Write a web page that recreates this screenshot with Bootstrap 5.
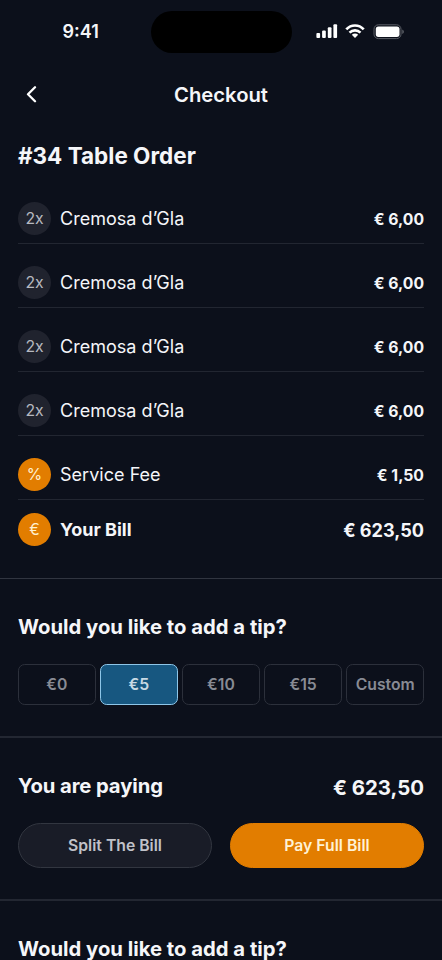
<!DOCTYPE html>
<html lang="en">
<head>
<meta charset="utf-8">
<meta name="viewport" content="width=device-width, initial-scale=1">
<title>Checkout</title>
<link href="https://cdn.jsdelivr.net/npm/bootstrap@5.3.0/dist/css/bootstrap.min.css" rel="stylesheet">
<style>
body{background:#0c101b;color:#f5f6f9;font-family:Inter,"Liberation Sans",sans-serif;font-size:18px;height:960px;overflow:hidden}
.screen{height:960px;overflow:hidden}
.gutter{padding-left:18px;padding-right:18px}
.status{height:64px}
.clock{width:151px;padding-left:62.5px;font-size:18px;font-weight:600;line-height:64px}
.island{width:140.5px;height:41.5px;margin-top:11px;border-radius:21px;background:#000}
.signals{padding-left:24px;padding-top:23px;gap:7px}
.signals svg{display:block}
.topbar{height:62px;grid-template-columns:44px 1fr 44px}
.topbar h1{font-size:20.25px;font-weight:600;line-height:62px}
.back{padding-left:8px}
.order-title{font-size:22.5px;font-weight:700;line-height:28px;padding-top:16px;height:67.5px}
.order-row{height:64px;padding-bottom:8px;border-bottom:1px solid #222631}
.order-row.first{height:50.5px}
.order-row.total{height:77.5px;padding-bottom:31.5px;border:0}
.item{gap:9px}
.label{letter-spacing:.03px}
.qty{width:33px;height:33px;font-size:15.75px;padding-top:1px;background:#20232e;color:#b7b9c0}
.qty.hot{background:#e27d00;color:#fff0cf}
.price{font-size:15.75px;font-weight:700;height:33px;padding-top:3px}
.total .price{font-size:18.1px;padding-top:2px}
.rule{border-top:2px solid #232732}
.rule.thin{border-top:1px solid #313540}
.section-title{font-size:20.25px;font-weight:700;line-height:26px}
.tip-section{height:158px;padding-top:35px}
.tips{display:grid;grid-template-columns:repeat(5,minmax(0,1fr));gap:4.5px;margin-top:24.4px}
.tip{--bs-btn-padding-x:0;--bs-btn-padding-y:0;--bs-btn-font-size:15.75px;--bs-btn-font-weight:600;--bs-btn-color:#888b94;--bs-btn-border-color:#2c303b;--bs-btn-border-radius:6.75px;height:41px;padding-top:1px}
.tip.active{--bs-btn-active-bg:#175780;--bs-btn-active-color:#c8d9e4;--bs-btn-active-border-color:#8ec6e8}
.pay-section{height:163px;padding-top:35px}
.pay-section .section-title{letter-spacing:-.1px}
.pay-section .amount{font-size:20.4px;font-weight:700;padding-top:2px;line-height:26px}
.pay-actions{gap:18px;margin-top:22px}
.pay{--bs-btn-font-size:15.75px;--bs-btn-font-weight:600;--bs-btn-padding-y:0;height:45px;padding-top:1px}
.split{--bs-btn-bg:#191c27;--bs-btn-color:#c0c2c9;--bs-btn-border-color:#323640}
.full{--bs-btn-bg:#e27d00;--bs-btn-color:#fff2d5;--bs-btn-border-color:#e27d00}
.next-section{padding-top:35px}
</style>
</head>
<body>
<main class="screen">
  <div class="status d-flex align-items-start">
    <div class="clock">9:41</div>
    <div class="island"></div>
    <div class="signals d-flex">
      <svg width="22" height="16" viewBox="0 0 22 16" fill="#fff"><rect x=".4" y="10" width="3.7" height="5" rx="1"/><rect x="6.1" y="7.5" width="3.7" height="7.5" rx="1"/><rect x="11.8" y="4.3" width="3.7" height="10.7" rx="1"/><rect x="17.4" y="1.2" width="3.7" height="13.8" rx="1"/></svg>
      <svg width="20" height="16" viewBox="0 0 20 16" fill="none" stroke="#fff"><path d="M1.3 6.4C6.1 1.2 13.9 1.2 18.7 6.4" stroke-width="2.7"/><path d="M4.5 9.7c3.1-3.1 7.9-3.1 11 0" stroke-width="2.6"/><path d="M10 15 6.8 11.8c1.8-1.7 4.6-1.7 6.4 0z" fill="#fff" stroke="none"/></svg>
      <svg width="32" height="17" viewBox="0 0 32 17"><rect x="2" y="1.8" width="27" height="13.8" rx="4.4" fill="none" stroke="#5c5f67"/><rect x="3.8" y="3.5" width="23.7" height="10.4" rx="2.6" fill="#fff"/><path d="M30.3 6.5c2 .8 2 3.6 0 4.4z" fill="#62656c"/></svg>
    </div>
  </div>

  <header class="topbar gutter d-grid align-items-center">
    <div class="back"><svg class="d-block" width="12" height="18" viewBox="0 0 12 18" fill="none" stroke="#fff" stroke-width="2.3" stroke-linecap="round" stroke-linejoin="round"><path d="M9 1.3 2 8.3l7 7"/></svg></div>
    <h1 class="m-0 text-center">Checkout</h1>
  </header>

  <section class="gutter">
    <h2 class="order-title m-0">#34 Table Order</h2>
    <div class="order-row first d-flex align-items-end justify-content-between"><div class="item d-flex align-items-center"><span class="qty rounded-circle d-flex align-items-center justify-content-center">2x</span><span class="label">Cremosa d’Gla</span></div><span class="price d-flex align-items-center">€ 6,00</span></div>
    <div class="order-row d-flex align-items-end justify-content-between"><div class="item d-flex align-items-center"><span class="qty rounded-circle d-flex align-items-center justify-content-center">2x</span><span class="label">Cremosa d’Gla</span></div><span class="price d-flex align-items-center">€ 6,00</span></div>
    <div class="order-row d-flex align-items-end justify-content-between"><div class="item d-flex align-items-center"><span class="qty rounded-circle d-flex align-items-center justify-content-center">2x</span><span class="label">Cremosa d’Gla</span></div><span class="price d-flex align-items-center">€ 6,00</span></div>
    <div class="order-row d-flex align-items-end justify-content-between"><div class="item d-flex align-items-center"><span class="qty rounded-circle d-flex align-items-center justify-content-center">2x</span><span class="label">Cremosa d’Gla</span></div><span class="price d-flex align-items-center">€ 6,00</span></div>
    <div class="order-row d-flex align-items-end justify-content-between"><div class="item d-flex align-items-center"><span class="qty hot rounded-circle d-flex align-items-center justify-content-center">%</span><span class="label">Service Fee</span></div><span class="price d-flex align-items-center">€ 1,50</span></div>
    <div class="order-row total d-flex align-items-end justify-content-between"><div class="item d-flex align-items-center"><span class="qty hot rounded-circle d-flex align-items-center justify-content-center">€</span><span class="fw-bold">Your Bill</span></div><span class="price d-flex align-items-center">€ 623,50</span></div>
  </section>

  <section class="rule thin tip-section gutter">
    <h2 class="section-title m-0">Would you like to add a tip?</h2>
    <div class="tips">
      <button class="btn tip">€0</button>
      <button class="btn tip active">€5</button>
      <button class="btn tip">€10</button>
      <button class="btn tip">€15</button>
      <button class="btn tip">Custom</button>
    </div>
  </section>

  <section class="rule pay-section gutter">
    <div class="d-flex justify-content-between align-items-start">
      <h2 class="section-title m-0">You are paying</h2>
      <span class="amount">€ 623,50</span>
    </div>
    <div class="pay-actions d-flex">
      <button class="btn pay split rounded-pill flex-fill w-50">Split The Bill</button>
      <button class="btn pay full rounded-pill flex-fill w-50">Pay Full Bill</button>
    </div>
  </section>

  <section class="rule next-section gutter">
    <h2 class="section-title m-0">Would you like to add a tip?</h2>
  </section>
</main>
<script src="https://cdn.jsdelivr.net/npm/bootstrap@5.3.0/dist/js/bootstrap.bundle.min.js"></script>
</body>
</html>
